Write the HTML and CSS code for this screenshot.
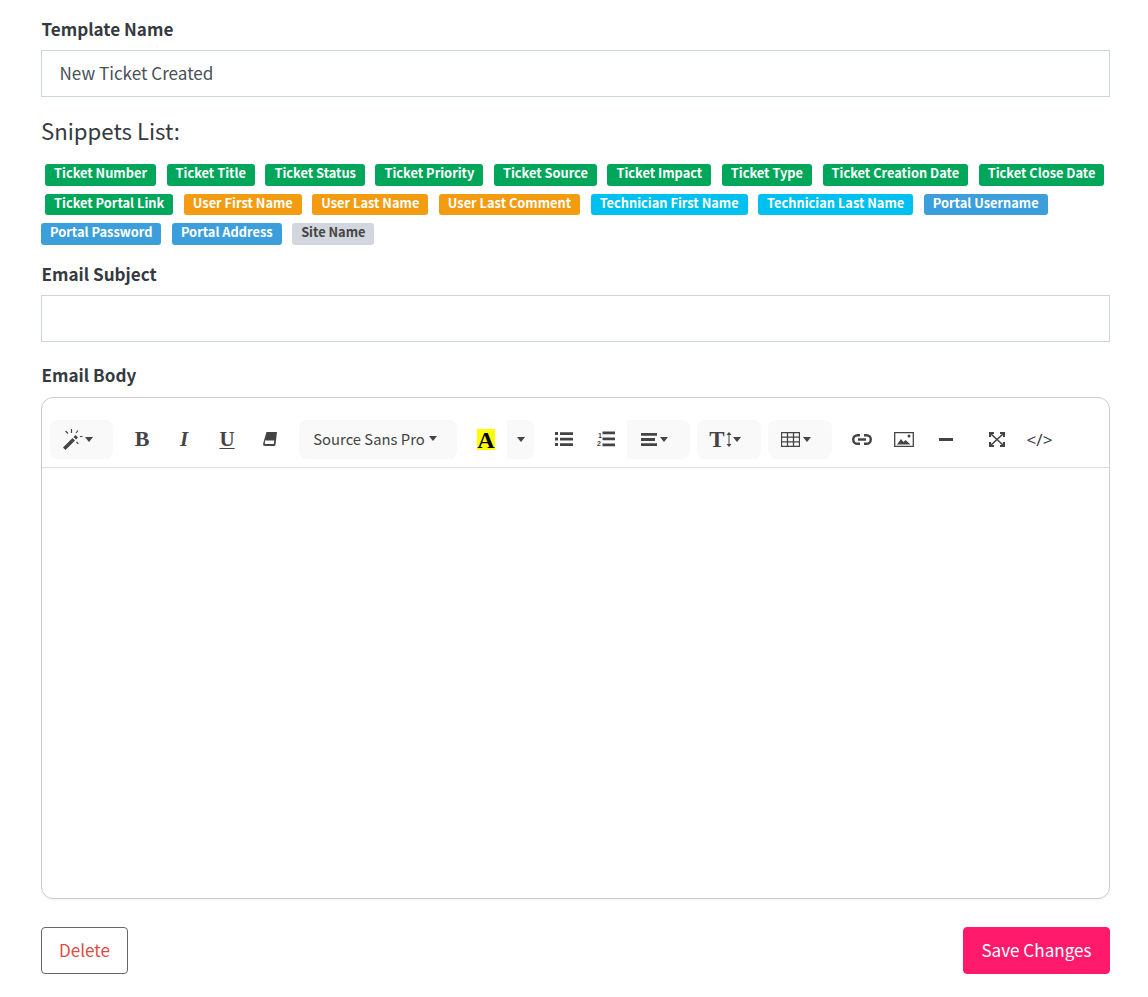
FILE: index.html
```html
<!DOCTYPE html>
<html lang="en">
<head>
<meta charset="utf-8">
<title>Email Template</title>
<link rel="stylesheet" href="styles.css">
</head>
<body>
<form class="page">
  <label class="label first">Template Name</label>
  <div class="input">New Ticket Created</div>
  <h3 class="snippets-title">Snippets List:</h3>
  <div class="snippets">
    <div class="row indent">
      <span class="badge green">Ticket Number</span><span class="badge green">Ticket Title</span><span class="badge green">Ticket Status</span><span class="badge green">Ticket Priority</span><span class="badge green">Ticket Source</span><span class="badge green">Ticket Impact</span><span class="badge green">Ticket Type</span><span class="badge green">Ticket Creation Date</span><span class="badge green">Ticket Close Date</span>
    </div>
    <div class="row indent">
      <span class="badge green">Ticket Portal Link</span><span class="badge orange">User First Name</span><span class="badge orange">User Last Name</span><span class="badge orange">User Last Comment</span><span class="badge cyan">Technician First Name</span><span class="badge cyan">Technician Last Name</span><span class="badge blue">Portal Username</span>
    </div>
    <div class="row">
      <span class="badge blue">Portal Password</span><span class="badge blue">Portal Address</span><span class="badge grey">Site Name</span>
    </div>
  </div>
  <label class="label">Email Subject</label>
  <div class="input"></div>
  <label class="label body-label">Email Body</label>
  <div class="editor">
    <div class="toolbar">
      <div class="btn shaded w63 tight-gap off-left">
        <svg width="22" height="22" viewBox="0 0 22 22"><path class="fill" d="M0 19.500L9.500 10l2.500 2.500L2.500 22z"/><path class="fill" d="M10.500 9l2-2 2.500 2.500-2 2z"/><path class="line" d="M8.500 1v4M2.500 3l2.500 2.500M15 2.500l-2 2.500M17 8.500h2.500M13.500 14l1.800 1.800"/></svg>
        <span class="caret"></span>
      </div>
      <div class="btn w42 serif bold-b">B</div>
      <div class="btn w42 serif ital">I</div>
      <div class="btn w44 serif under">U</div>
      <div class="btn w42">
        <svg width="14" height="14" viewBox="0 0 14 14"><path class="fill" d="M3.500 0H14l-1.500 12.500q-.2 1.500-1.500 1.500H2q-2 0-2-2z"/><path d="M2 8.500h9.300l-.5 3.500H2.600q-.9 0-.8-1z" fill="#fff"/></svg>
      </div>
      <div class="btn shaded w158 font-btn">Source Sans Pro<span class="caret"></span></div>
      <div class="btn w42"><span class="color-a">A</span></div>
      <div class="btn shaded w27 flat-left wide-after"><span class="caret"></span></div>
      <div class="btn w42">
        <svg width="18" height="14" viewBox="0 0 18 14"><path class="fill" d="M0 0h3v3H0zM0 5.500h3v3H0zM0 11h3v3H0zM5 .3h13v2.600H5zM5 5.800h13v2.600H5zM5 11.300h13v2.600H5z"/></svg>
      </div>
      <div class="btn w42">
        <svg width="18" height="16" viewBox="0 0 18 16"><path class="fill" d="M5.500 .5h12.500v2.700H5.500zM5.500 6.500h12.500v2.700H5.500zM5.500 12.500h12.500v2.700H5.500z"/><text x="1" y="6.500" class="mini">1</text><text x="0" y="15" class="mini">2</text></svg>
      </div>
      <div class="btn shaded w63 flat-left narrow-after off-left">
        <svg width="16" height="13" viewBox="0 0 16 13"><path class="fill" d="M0 0h16v2.800H0zM0 5.100h14v2.800H0zM0 10.200h16V13H0z"/></svg>
        <span class="caret"></span>
      </div>
      <div class="btn shaded w64 narrow-after no-gap off-left">
        <span class="serif big-t">T</span>
        <svg width="6" height="15" viewBox="0 0 6 15"><path class="fill" d="M3 0l2.500 3h-2v9h2L3 15 .5 12h2V3h-2z"/></svg>
        <span class="caret"></span>
      </div>
      <div class="btn shaded w64 off-left">
        <svg width="19" height="15" viewBox="0 0 19 15"><path class="table" d="M.5.500h18v14H.5zM.5 5.200h18M.5 9.800h18M6.500.500v14M12.500.500v14"/></svg>
        <span class="caret"></span>
      </div>
      <div class="btn w43">
        <svg width="20" height="11" viewBox="0 0 20 11"><path class="link" d="M8 1.200H5.500a4.300 4.300 0 0 0 0 8.600H8M12 1.200h2.500a4.300 4.300 0 0 1 0 8.600H12M6 5.500h8"/></svg>
      </div>
      <div class="btn w42">
        <svg width="20" height="15" viewBox="0 0 20 15"><path class="table" d="M.7.700h18.600v13.600H.7z"/><path class="fill" d="M3 12.500l4-5.500 2.500 3 2-2 5 4.500z"/><circle class="fill" cx="15" cy="4" r="1.500"/></svg>
      </div>
      <div class="btn w42">
        <svg width="14" height="3" viewBox="0 0 14 3"><path class="fill" d="M0 0h14v3H0z"/></svg>
      </div>
      <div class="btn w42 after-gap">
        <svg width="16" height="15" viewBox="0 0 16 15"><path class="thick" d="M1 5V1h4M11 1h4v4M1 10v4h4M11 14h4v-4"/><path class="thin" d="M1.500 1.500l13 12M14.500 1.500l-13 12"/></svg>
      </div>
      <div class="btn w43 code">&lt;/&gt;</div>
    </div>
    <div class="editable"></div>
  </div>
  <div class="actions">
    <button type="button" class="action delete">Delete</button>
    <button type="button" class="action save">Save Changes</button>
  </div>
</form>
</body>
</html>
```
FILE: styles.css
```css
* { box-sizing: border-box; }
html, body { margin: 0; padding: 0; background: #fff; }
body {
  font-family: "Noto Sans CJK JP", "Noto Sans", sans-serif;
  color: #343a40;
  font-size: 17.100px;
  height: 997px;
  overflow: hidden;
}
.page { width: 1069px; margin-left: 41px; padding-top: 17px; }
.label {
  display: block;
  font-weight: 700;
  font-size: 17.100px;
  line-height: 24px;
  height: 24px;
  margin: 0 0 9px;
  padding-left: .5px;
  color: #343a40;
}
.label.body-label { margin: 21px 0 10px; }
.input {
  height: 47px;
  border: 1px solid #ced4da;
  padding: 0 18px 2px 17.500px;
  line-height: 43px;
  font-size: 17.100px;
  color: #495057;
  background: #fff;
}
.snippets-title {
  font-weight: 400;
  font-size: 22.200px;
  line-height: 30px;
  margin: 18px 0 19px;
  color: #343a40;
}
.snippets { display: flex; flex-direction: column; gap: 8px; margin-bottom: 17px; }
.row { display: flex; gap: 10.500px; }
.row.indent { padding-left: 4px; }
.badge {
  height: 21.500px;
  padding: 0 9px;
  border-radius: 3px;
  font-size: 12.820px;
  font-weight: 700;
  line-height: 18px;
  color: #fff;
  white-space: nowrap;
}
.green { background: #00a65a; }
.orange { background: #f39c12; }
.cyan { background: #00c0ef; }
.blue { background: #3c9fdc; }
.grey { background: #d2d6de; color: #444; }

.editor {
  height: 502px;
  border: 1px solid #ccc;
  border-radius: 12px;
  box-shadow: 0 1px 1px rgba(0,0,0,.05);
  overflow: hidden;
}
.toolbar {
  display: flex;
  align-items: flex-start;
  height: 70px;
  padding: 22px 0 0 8px;
  border-bottom: 1px solid #ddd;
}
.btn {
  display: flex;
  align-items: center;
  justify-content: center;
  gap: 3px;
  height: 39px;
  color: #444;
  flex: none;
}
.shaded { background: #f9f9f9; border-radius: 8px; margin-right: 8px; }
.flat-left { border-radius: 0 8px 8px 0; }
.off-left { padding-right: 8px; }
.w27 { width: 27px; }
.w42 { width: 42px; }
.w43 { width: 43px; }
.w44 { width: 44px; }
.w63 { width: 63px; }
.w64 { width: 64px; }
.w158 { width: 158px; margin-left: 8px; padding-right: 6px; }
.wide-after { margin-right: 9px; }
.narrow-after { margin-right: 7px; }
.after-gap { margin-left: 9px; }
.tight-gap { gap: 0; }
.no-gap { gap: 1px; }
.serif { font-family: "Liberation Serif", serif; }
.bold-b { font-weight: 700; font-size: 22px; }
.ital { font-style: italic; font-weight: 700; font-size: 21px; }
.under { font-weight: 700; font-size: 21px; text-decoration: underline; text-underline-offset: 2px; text-decoration-thickness: 1px; }
.font-btn { font-size: 14.800px; gap: 4px; padding-bottom: 1px; }
.caret {
  display: inline-block;
  width: 0;
  height: 0;
  border-left: 4px solid transparent;
  border-right: 4px solid transparent;
  border-top: 5px solid #444;
}
.color-a {
  display: block;
  width: 18px;
  height: 21px;
  background: #ff0;
  color: #000;
  font-family: "Liberation Serif", serif;
  font-weight: 700;
  font-size: 24px;
  line-height: 22px;
  text-align: center;
}
.big-t { font-size: 23px; font-weight: 700; line-height: 1; }
.code { font-family: "Noto Sans", sans-serif; font-size: 17px; }
.fill { fill: #444; }
.line { fill: none; stroke: #444; stroke-width: 1.200; }
.table { fill: none; stroke: #444; stroke-width: 1.300; }
.thin { fill: none; stroke: #444; stroke-width: 1.600; }
.thick { fill: none; stroke: #444; stroke-width: 2.200; }
.link { fill: none; stroke: #444; stroke-width: 2.400; }
.mini { font-family: "Liberation Sans", sans-serif; font-size: 7px; font-weight: 700; fill: #444; }
.editable { height: 430px; }
.actions { display: flex; justify-content: space-between; margin-top: 28px; }
.action {
  height: 47px;
  border-radius: 4px;
  font-family: inherit;
  font-size: 17.100px;
  padding: 0 0 2px;
  cursor: pointer;
}
.delete { width: 87px; background: #fff; border: 1px solid #666; color: #dc4c46; }
.save { width: 147px; background: #ff1a6b; border: 1px solid #ff1a6b; color: #fff; }
```
